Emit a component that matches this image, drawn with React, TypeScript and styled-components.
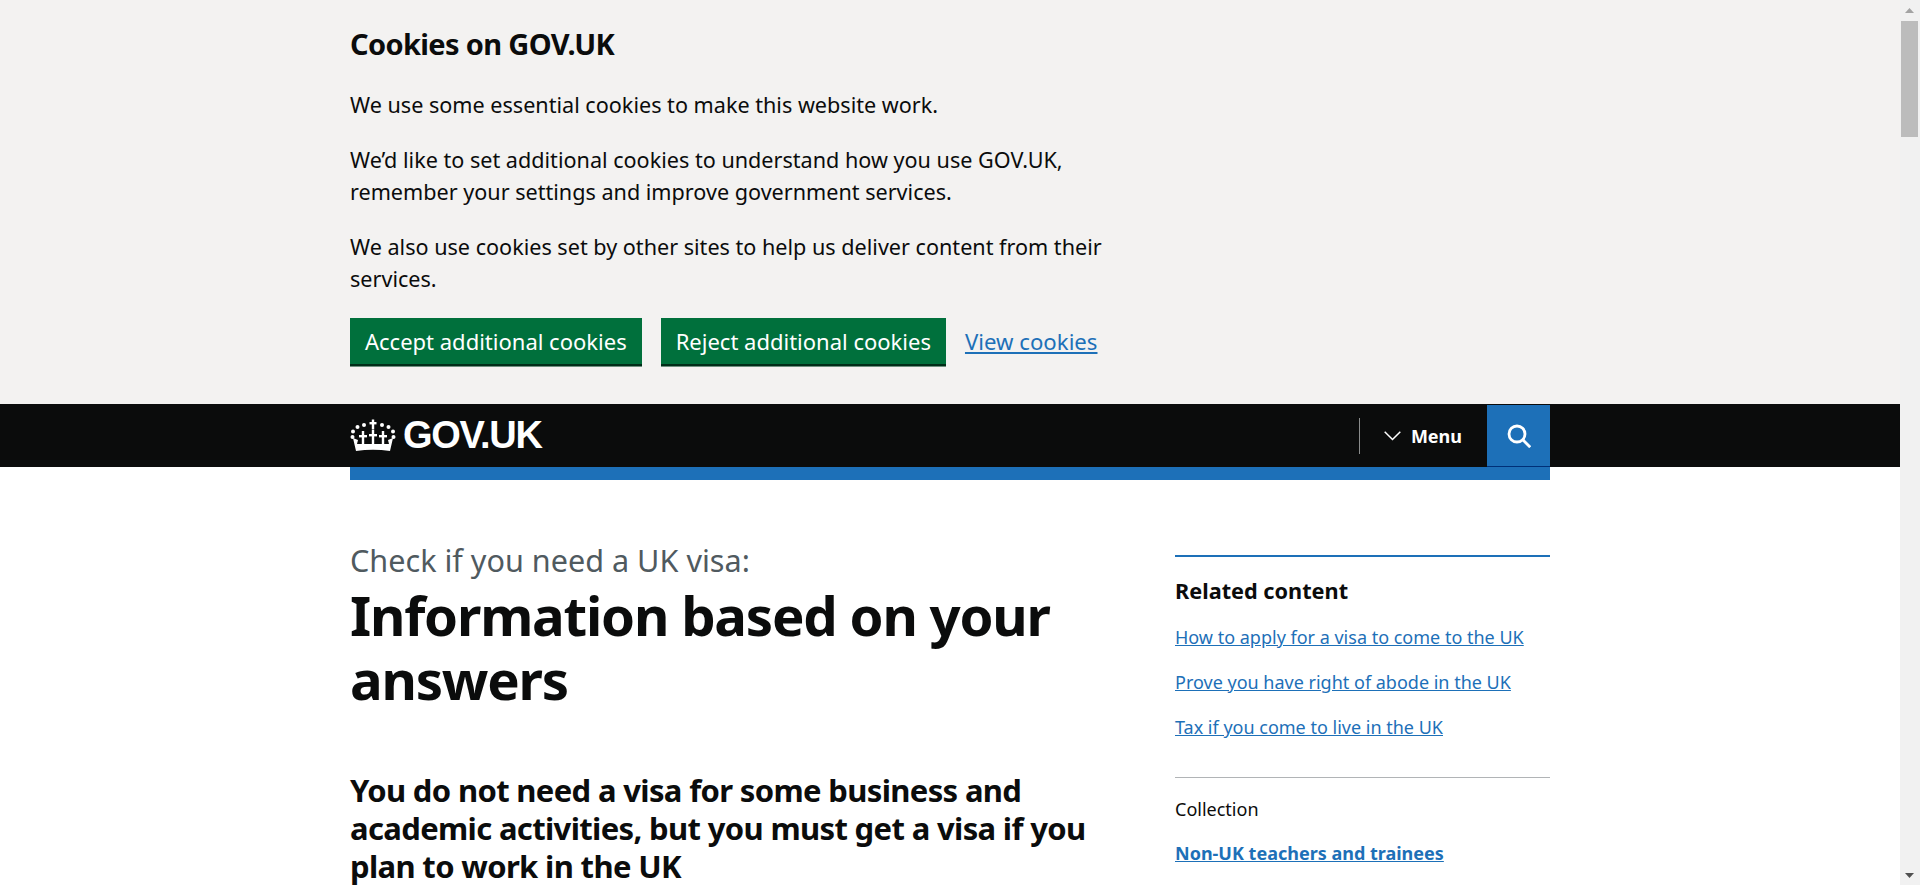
import React from "react";
import styled, { createGlobalStyle } from "styled-components";

const Global = createGlobalStyle`
  html { overflow: hidden; height: 100%; }
  body { margin: 0; height: 100%; background: #fff; color: #0b0c0c; font-family: "Noto Sans", "Liberation Sans", sans-serif; }
  #root { height: 100%; }
`;

const Shell = styled.div`
  display: grid;
  grid-template-columns: 1900px 20px;
  height: 100%;
  overflow: hidden;
`;
const Page = styled.div`
  min-width: 0;
`;
const Scrollbar = styled.div`
  background: #f1f1f1;
  display: flex;
  flex-direction: column;
  justify-content: space-between;
  padding-left: 1px;
  padding-right: 2px;
`;
const ScrollArrow = styled.div`
  height: 21px;
  display: flex;
  align-items: center;
  justify-content: center;
`;
const ScrollTrack = styled.div`
  flex: 1;
`;
const ScrollThumb = styled.div`
  height: 116px;
  background: #bcbcbc;
`;
const Width = styled.div`
  width: 1200px;
  margin: 0 auto;
`;
const Banner = styled.section`
  background: #f3f2f1;
  height: 404px;
  box-sizing: border-box;
  padding-top: 24px;
`;
const BannerCol = styled.div`
  width: 780px;
`;
const BannerTitle = styled.h2`
  margin: 0 0 25px;
  font-size: 29px;
  line-height: 40px;
  font-weight: 700;
  letter-spacing: -0.65px;
`;
const BannerText = styled.p`
  margin: 0 0 23px;
  font-size: 21.6px;
  line-height: 32px;
`;
const Actions = styled.div`
  display: flex;
  align-items: center;
  gap: 19px;
  margin-top: 4px;
`;
const GreenButton = styled.button`
  height: 46px;
  box-sizing: border-box;
  background: #00703c;
  color: #fff;
  border: 0;
  box-shadow: 0 2px 0 #002d18, 0 3px 0 #6f8f7f;
  font: inherit;
  font-size: 22px;
  padding: 0 15px 1px;
`;
const BannerLink = styled.a`
  font-size: 22.2px;
  color: #1d70b8;
  text-decoration: underline;
`;
const Masthead = styled.header`
  background: #0b0c0c;
  height: 63px;
`;
const MastRow = styled(Width)`
  display: flex;
  align-items: stretch;
  height: 63px;
`;
const Logo = styled.a`
  display: flex;
  align-items: center;
  gap: 7px;
  color: #fff;
  text-decoration: none;
  font-size: 38px;
  font-weight: 700;
  letter-spacing: -1.3px;
  font-family: "Liberation Sans", sans-serif;
`;
const MastEnd = styled.div`
  margin-left: auto;
  display: flex;
  align-items: center;
  padding-top: 1px;
`;
const MenuButton = styled.div`
  display: flex;
  align-items: center;
  gap: 10px;
  height: 36px;
  border-left: 1px solid #8a8c8c;
  padding: 0 25px 0 24px;
  color: #fff;
  font-weight: 700;
  font-size: 18px;
`;
const SearchButton = styled.div`
  width: 63px;
  height: 62px;
  background: #1d70b8;
  border-bottom: 1px solid #003078;
  display: flex;
  align-items: center;
  justify-content: center;
  box-sizing: border-box;
`;
const BlueBar = styled(Width)`
  height: 13px;
  background: #1d70b8;
`;
const Main = styled(Width)`
  display: grid;
  grid-template-columns: 780px 375px;
  column-gap: 45px;
  padding-top: 60px;
`;
const Caption = styled.div`
  font-size: 30.6px;
  line-height: 40px;
  color: #505a5f;
`;
const Title = styled.h1`
  margin: 3px 0 60px;
  font-size: 54.5px;
  line-height: 64px;
  font-weight: 700;
  letter-spacing: -1.2px;
`;
const Sub = styled.h2`
  margin: 0;
  font-size: 31px;
  line-height: 38px;
  font-weight: 700;
  letter-spacing: -0.65px;
`;
const Side = styled.aside`
  border-top: 2px solid #1d70b8;
  margin-top: 15px;
  padding-top: 19px;
`;
const SideTitle = styled.h2`
  margin: 0 0 19px;
  font-size: 21.7px;
  line-height: 30px;
  font-weight: 700;
`;
const SideLink = styled.a`
  display: block;
  width: fit-content;
  color: #1d70b8;
  text-decoration: underline;
  font-size: 18px;
  line-height: 25px;
  margin-bottom: 20px;
`;
const SideRule = styled.hr`
  border: 0;
  border-top: 1px solid #b1b4b6;
  margin: 37px 0 0;
`;
const SideLabel = styled.div`
  font-size: 18px;
  line-height: 25px;
  margin: 19px 0 19px;
`;
const SideStrong = styled(SideLink)`
  font-weight: 700;
`;

const Crown = () => (
  <svg width="46" height="33" viewBox="0 0 46 33" fill="#fff" aria-hidden="true">
    <rect x="21.8" y="0.5" width="2.4" height="10" />
    <rect x="19.5" y="3" width="7" height="2.4" />
    <circle cx="14" cy="6" r="2" />
    <circle cx="32" cy="6" r="2" />
    <circle cx="7.5" cy="8" r="2" />
    <circle cx="38.5" cy="8" r="2" />
    <circle cx="3" cy="12.5" r="2" />
    <circle cx="43" cy="12.5" r="2" />
    <circle cx="2.5" cy="18" r="2" />
    <circle cx="43.5" cy="18" r="2" />
    <path d="M3 19 L8 21 L7 25 L39 25 L38 21 L43 19 L40 32 Q23 29.5 6 32 Z" />
    <rect x="21.8" y="11" width="2.4" height="14" />
    <rect x="19" y="15" width="8" height="2.4" />
    <rect x="11.8" y="12" width="2.4" height="13" />
    <rect x="9" y="16" width="8" height="2.4" />
    <rect x="31.8" y="12" width="2.4" height="13" />
    <rect x="29" y="16" width="8" height="2.4" />
  </svg>
);

export default function App() {
  return (
    <Shell>
      <Global />
      <Page>
        <Banner>
          <Width>
            <BannerCol>
              <BannerTitle>Cookies on GOV.UK</BannerTitle>
              <BannerText>We use some essential cookies to make this website work.</BannerText>
              <BannerText>We’d like to set additional cookies to understand how you use GOV.UK, remember your settings and improve government services.</BannerText>
              <BannerText>We also use cookies set by other sites to help us deliver content from their services.</BannerText>
              <Actions>
                <GreenButton>Accept additional cookies</GreenButton>
                <GreenButton>Reject additional cookies</GreenButton>
                <BannerLink href="#">View cookies</BannerLink>
              </Actions>
            </BannerCol>
          </Width>
        </Banner>
        <Masthead>
          <MastRow>
            <Logo href="#"><Crown />GOV.UK</Logo>
            <MastEnd>
              <MenuButton>
                <svg width="17" height="10" viewBox="0 0 17 10" fill="none" stroke="#fff" strokeWidth="1.5"><path d="M0.7 0.7l7.8 7.8 7.8-7.8" /></svg>
                Menu
              </MenuButton>
              <SearchButton>
                <svg width="24" height="24" viewBox="0 0 24 24" fill="none" stroke="#fff" strokeWidth="2.8"><circle cx="10" cy="10" r="8" /><path d="M15.8 15.8l7.4 7.4" /></svg>
              </SearchButton>
            </MastEnd>
          </MastRow>
        </Masthead>
        <BlueBar />
        <Main>
          <div>
            <Caption>Check if you need a UK visa:</Caption>
            <Title>Information based on your answers</Title>
            <Sub>You do not need a visa for some business and academic activities, but you must get a visa if you plan to work in the UK</Sub>
          </div>
          <Side>
            <SideTitle>Related content</SideTitle>
            <SideLink href="#">How to apply for a visa to come to the UK</SideLink>
            <SideLink href="#">Prove you have right of abode in the UK</SideLink>
            <SideLink href="#">Tax if you come to live in the UK</SideLink>
            <SideRule />
            <SideLabel>Collection</SideLabel>
            <SideStrong href="#">Non-UK teachers and trainees</SideStrong>
          </Side>
        </Main>
      </Page>
      <Scrollbar>
        <ScrollArrow>
          <svg width="9" height="5" viewBox="0 0 9 5" fill="#a3a3a3"><path d="M4.5 0L9 5H0z" /></svg>
        </ScrollArrow>
        <ScrollTrack>
          <ScrollThumb />
        </ScrollTrack>
        <ScrollArrow>
          <svg width="9" height="5" viewBox="0 0 9 5" fill="#505050"><path d="M0 0h9L4.5 5z" /></svg>
        </ScrollArrow>
      </Scrollbar>
    </Shell>
  );
}
